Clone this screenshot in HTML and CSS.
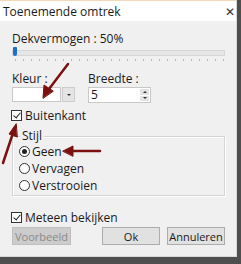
FILE: index.html
```html
<!DOCTYPE html>
<html lang="nl">
<head>
    <meta charset="UTF-8">
    <title>Toenemende omtrek</title>
    <link rel="stylesheet" href="styles.css">
</head>
<body>
    <div class="dialog">
        <div class="titlebar">
            <span class="title">Toenemende omtrek</span>
            <span class="close">&#x2715;</span>
        </div>
        <div class="content">
            <div class="label">Dekvermogen : 50%</div>
            <div class="slider">
                <div class="track"></div>
                <div class="thumb"></div>
            </div>
            <div class="ticks"></div>

            <div class="fields">
                <div class="field">
                    <div class="label">Kleur :</div>
                    <div class="combo">
                        <div class="combo-box"></div>
                        <div class="combo-btn"><span class="caret"></span></div>
                    </div>
                </div>
                <div class="field">
                    <div class="label">Breedte :</div>
                    <div class="spin">
                        <span class="spin-value">5</span>
                        <div class="spin-btns">
                            <span class="spin-up"></span>
                            <span class="spin-down"></span>
                        </div>
                    </div>
                </div>
            </div>

            <label class="check">
                <span class="box checked"></span>Buitenkant
            </label>

            <div class="group">
                <span class="legend">Stijl</span>
                <label class="radio"><span class="dot selected"></span>Geen</label>
                <label class="radio"><span class="dot"></span>Vervagen</label>
                <label class="radio"><span class="dot"></span>Verstrooien</label>
            </div>

            <label class="check check-preview">
                <span class="box checked"></span>Meteen bekijken
            </label>

            <div class="buttons">
                <button class="btn disabled">Voorbeeld</button>
                <span class="spacer"></span>
                <button class="btn">Ok</button>
                <button class="btn">Annuleren</button>
            </div>
        </div>

        <!-- annotation arrows drawn over the dialog -->
        <svg class="arrows" width="237" height="258" viewBox="0 0 237 258">
            <g stroke="#7a1010" fill="#7a1010" stroke-width="2.5" stroke-linecap="round">
                <line x1="68" y1="64" x2="49" y2="89"/>
                <polygon points="43,98 44,85 53,91" stroke-width="1"/>
                <line x1="3" y1="163" x2="13" y2="133"/>
                <polygon points="16,124 9,134 17,137" stroke-width="1"/>
                <line x1="100" y1="151" x2="72" y2="151"/>
                <polygon points="63,151 73,146 73,156" stroke-width="1"/>
            </g>
        </svg>
    </div>
</body>
</html>
```

FILE: styles.css
```css
body {
    margin: 0;
    background: #4e4e4e;
    font-family: "Open Sans", "Noto Sans", sans-serif;
    font-size: 12px;
    color: #1a1a1a;
    width: 241px;
    height: 264px;
    overflow: hidden;
}
.dialog {
    position: relative;
    width: 237px;
    height: 257px;
    box-sizing: border-box;
    background: #f0f0f0;
    border-right: 1px solid #d8d8d8;
    border-bottom: 1px solid #d8d8d8;
    overflow: hidden;
}
.titlebar {
    height: 21px;
    background: #fff;
    display: flex;
    align-items: center;
    justify-content: space-between;
    padding: 0 1px 0 3px;
    border-top: 1px solid #f3d9b8;
    box-sizing: border-box;
}
.close { font-size: 12px; color: #333; }
.content { padding: 11px 11px 0 12px; }
.label { line-height: 14px; white-space: nowrap; }
.slider {
    position: relative;
    height: 11px;
    margin-top: 1px;
}
.track {
    position: absolute;
    left: 0; right: 0; top: 3px;
    height: 4px;
    background: #e6e6e6;
    border: 1px solid #d6d6d6;
}
.thumb {
    position: absolute;
    left: 1px; top: 0;
    width: 4px; height: 9px;
    background: #1f6fc4;
    border-radius: 1px 1px 2px 2px;
}
.ticks {
    height: 2px;
    margin: 1px 0 0 3px;
    background: repeating-linear-gradient(90deg, #b5b5b5 0 1px, transparent 1px 8px);
}
.fields {
    display: flex;
    gap: 13px;
    margin-top: 11px;
}
.field { width: 63px; }
.combo, .spin {
    display: flex;
    height: 15px;
    margin-top: 1px;
}
.combo-box {
    width: 49px;
    background: #fff;
    border: 1px solid #c8c8c8;
}
.combo-btn {
    width: 11px;
    margin-left: 1px;
    background: #e4e4e4;
    border: 1px solid #cdcdcd;
    display: flex;
    align-items: center;
    justify-content: center;
}
.caret {
    border-left: 2px solid transparent;
    border-right: 2px solid transparent;
    border-top: 2px solid #333;
}
.spin {
    width: 63px;
    background: #fff;
    border: 1px solid #c8c8c8;
    box-sizing: border-box;
    height: 16px;
    justify-content: space-between;
}
.spin-value { padding-left: 2px; line-height: 14px; }
.spin-btns {
    width: 9px;
    display: flex;
    flex-direction: column;
    gap: 1px;
    padding: 1px;
}
.spin-up, .spin-down {
    flex: 1;
    background: #e4e4e4;
    display: flex;
    align-items: center;
    justify-content: center;
}
.spin-up::after, .spin-down::after {
    content: "";
    border-left: 2px solid transparent;
    border-right: 2px solid transparent;
}
.spin-up::after { border-bottom: 2px solid #333; }
.spin-down::after { border-top: 2px solid #333; }
.check {
    display: flex;
    align-items: center;
    gap: 3px;
    margin-top: 6px;
    margin-left: -1px;
    line-height: 13px;
}
.box {
    width: 11px; height: 11px;
    box-sizing: border-box;
    border: 1px solid #333;
    background: #fff;
    position: relative;
}
.box.checked::after {
    content: "";
    position: absolute;
    left: 3px; top: 0;
    width: 3px; height: 6px;
    border: solid #222;
    border-width: 0 1px 1px 0;
    transform: rotate(40deg);
}
.group {
    position: relative;
    margin-top: 14px;
    padding: 6px 0 1px 6px;
    border: 1px solid #d5d5d5;
    box-shadow: inset 1px 1px 0 #fff, 1px 1px 0 #fff;
    width: 213px;
    box-sizing: border-box;
}
.legend {
    position: absolute;
    left: 7px; top: -8px;
    padding: 0 2px;
    background: #f0f0f0;
    line-height: 14px;
}
.radio {
    display: flex;
    align-items: center;
    gap: 2px;
    height: 17px;
}
.dot {
    width: 11px; height: 11px;
    box-sizing: border-box;
    border: 1px solid #333;
    border-radius: 50%;
    background: #fff;
    display: flex;
    align-items: center;
    justify-content: center;
}
.dot.selected::after {
    content: "";
    width: 5px; height: 5px;
    border-radius: 50%;
    background: #222;
}
.check-preview { margin-top: 15px; }
.buttons {
    display: flex;
    gap: 7px;
    margin-top: 3px;
}
.spacer { flex: 1; }
.btn {
    width: 58px;
    height: 18px;
    padding: 0;
    font: inherit;
    font-size: 11px;
    background: #e1e1e1;
    border: 1px solid #adadad;
    color: #1a1a1a;
}
.btn.disabled {
    width: 59px;
    background: #cccccc;
    border-color: #bfbfbf;
    color: #8a8a8a;
}
.arrows {
    position: absolute;
    left: 0; top: 0;
    pointer-events: none;
}
```
